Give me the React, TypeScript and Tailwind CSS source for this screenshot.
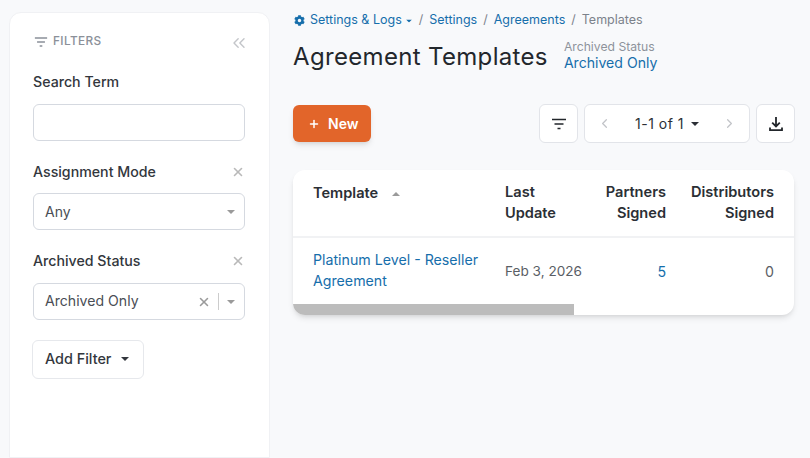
import React from 'react';
import { ChevronLeft, ChevronRight, ChevronsLeft, Plus, X } from 'lucide-react';
import { FaCog } from 'react-icons/fa';

const Caret: React.FC<{ className?: string; up?: boolean }> = ({ className = '', up = false }) => (
    <svg width="8" height="4" viewBox="0 0 8 4" className={className}>
        <path d={up ? 'M0 4 L4 0 L8 4 Z' : 'M0 0 L8 0 L4 4 Z'} fill="currentColor" />
    </svg>
);

const FilterLines: React.FC<{ className?: string; size?: number; weight?: number }> = ({ className = '', size = 16, weight = 1.3 }) => (
    <svg width={size} height={size} viewBox="0 0 16 16" className={className} fill="none" stroke="currentColor" strokeWidth={weight}>
        <path d="M1 3.5 H15 M3.5 8 H12.5 M6.5 12.5 H9.5" />
    </svg>
);

const DownloadIcon: React.FC = () => (
    <svg width="16" height="16" viewBox="0 0 16 16" fill="none" stroke="currentColor" strokeWidth="1.8" className="text-[#22262b]">
        <path d="M8 1 V10 M4.2 6.6 L8 10.4 L11.8 6.6" />
        <path d="M2 11.5 V14.2 H14 V11.5" />
    </svg>
);

const FilterLabel: React.FC<{ label: string; removable?: boolean; gap: string }> = ({ label, removable = false, gap }) => (
    <div className={`flex items-center justify-between h-5 ${gap}`}>
        <span className="text-[14.2px] font-medium text-[#33373d]">{label}</span>
        {removable && <X size={14} strokeWidth={2.8} className="text-[#b9b9b9] mr-[1px]" />}
    </div>
);

const Sidebar: React.FC = () => (
    <aside className="w-[261px] h-[446px] shrink-0 mt-3 ml-[9px] bg-white border border-[#f0f1f4] rounded-t-xl px-[23px] pt-[20px]">
        <div className="flex items-center justify-between h-[18px] pl-[1px]">
            <div className="flex items-center gap-[5px] text-[#8b9099]">
                <FilterLines size={14} weight={1.6} />
                <span className="text-[11.8px] font-medium tracking-[0.4px]">FILTERS</span>
            </div>
            <ChevronsLeft size={20} strokeWidth={1.7} className="text-[#c4c6ca] -mr-[3px] mt-[1px]" />
        </div>
        <div className="mt-[21px]">
            <FilterLabel label="Search Term" gap="mb-[12px]" />
            <input className="block w-[212px] h-[37px] bg-white border border-[#d5d9e0] rounded-md" />
        </div>
        <div className="mt-[21px]">
            <FilterLabel label="Assignment Mode" gap="mb-[11px]" removable />
            <div className="flex items-center justify-between w-[212px] h-[37px] border border-[#d5d9e0] rounded-md pl-[11px] pr-[9px]">
                <span className="text-[14px] pb-[1px] text-[#4a4e55]">Any</span>
                <Caret className="text-[#9a9a9a]" />
            </div>
        </div>
        <div className="mt-[21px]">
            <FilterLabel label="Archived Status" gap="mb-[12px]" removable />
            <div className="flex items-center w-[212px] h-[37px] border border-[#d5d9e0] rounded-md pl-[11px] pr-[9px]">
                <span className="text-[14.1px] pb-[1px] text-[#4a4e55] flex-1">Archived Only</span>
                <X size={14} strokeWidth={2.6} className="text-[#9b9b9b] mr-[-1px]" />
                <div className="w-px h-[17px] bg-[#cccccc] mx-[8px]" />
                <Caret className="text-[#9a9a9a]" />
            </div>
        </div>
        <button className="flex items-center gap-[10px] mt-[20px] -ml-[1px] h-[39px] w-[112px] pl-[12px] bg-white border border-[#e6e8ec] rounded-md text-[14.4px] font-medium text-[#33373d]">
            <span className="pb-[1px]">Add Filter</span>
            <Caret className="text-[#33373d] -mt-[1px]" />
        </button>
    </aside>
);

const Main: React.FC = () => (
    <main className="flex-1 pl-[23px] pr-[16px] pt-[12px] min-w-0">
        <nav className="flex items-center h-[17px] text-[12.5px] text-[#166eab]">
            <FaCog size={11} className="mr-[5px] ml-[1px]" />
            <span>Settings &amp; Logs</span>
            <Caret className="ml-[3px] scale-75" />
            <span className="text-[#7c828b] mx-[6px]">/</span>
            <span>Settings</span>
            <span className="text-[#7c828b] mx-[6px]">/</span>
            <span>Agreements</span>
            <span className="text-[#7c828b] mx-[6px]">/</span>
            <span className="text-[#7c828b]">Templates</span>
        </nav>
        <div className="flex items-center mt-[10px] h-[36px]">
            <h1 className="text-[24px] tracking-[0.33px] text-[#23272c]">Agreement Templates</h1>
            <div className="ml-[16px] flex flex-col -mt-[4px]">
                <span className="text-[12.2px] leading-4 text-[#8e939b]">Archived Status</span>
                <span className="text-[14.1px] leading-4 text-[#166eab]">Archived Only</span>
            </div>
        </div>
        <div className="flex items-center justify-between mt-[29px] h-[39px]">
            <button className="flex items-center h-[37px] w-[78px] pl-[15px] rounded-md bg-[#e2652a] text-white text-[14px] font-semibold shadow-md">
                <Plus size={12} strokeWidth={3} />
                <span className="ml-[8px]">New</span>
            </button>
            <div className="flex items-center gap-[6px] -mr-[1px]">
                <button className="flex items-center justify-center w-[39px] h-[39px] bg-white border border-[#e2e4e9] rounded-md text-[#22262b]">
                    <FilterLines />
                </button>
                <div className="flex items-center justify-between w-[166px] h-[39px] bg-white border border-[#e2e4e9] rounded-md px-[12px]">
                    <ChevronLeft size={15} className="text-[#c2c4c8]" />
                    <div className="flex items-center gap-[7px]">
                        <span className="text-[14px] tracking-[0.5px] text-[#2b2f35]">1-1 of 1</span>
                        <Caret className="text-[#2b2f35]" />
                    </div>
                    <ChevronRight size={15} className="text-[#c2c4c8]" />
                </div>
                <button className="flex items-center justify-center w-[39px] h-[39px] bg-white border border-[#e2e4e9] rounded-md">
                    <DownloadIcon />
                </button>
            </div>
        </div>
        <div className="mt-[27px] bg-white rounded-xl shadow-md overflow-hidden">
            <table className="w-full table-fixed border-collapse text-[14.2px]">
                <colgroup>
                    <col className="w-[192px]" />
                    <col className="w-[101px]" />
                    <col className="w-[100px]" />
                    <col />
                </colgroup>
                <thead>
                    <tr className="h-[67px] border-b-2 border-[#f1f2f4] text-[14.6px] text-[#2b2f35] leading-[21px]">
                        <th className="pl-5 pt-[12px] pb-[11px] align-top text-left font-semibold">
                            <span className="flex items-center gap-[14px] mt-[1px]">
                                Template
                                <Caret up className="text-[#9a9a9a]" />
                            </span>
                        </th>
                        <th className="pl-5 pt-[12px] pb-[11px] align-top text-left font-semibold">Last<br />Update</th>
                        <th className="pr-5 pt-[12px] pb-[11px] align-top text-right font-semibold">Partners<br />Signed</th>
                        <th className="pr-5 pt-[12px] pb-[11px] align-top text-right font-semibold">Distributors<br />Signed</th>
                    </tr>
                </thead>
                <tbody>
                    <tr className="h-[67px] leading-[21px]">
                        <td className="pl-5 pb-[2px] text-[#166eab]">Platinum Level - Reseller Agreement</td>
                        <td className="pl-5 text-[13.6px] text-[#5a5e65] whitespace-nowrap">Feb 3, 2026</td>
                        <td className="pr-5 text-right text-[#166eab]">5</td>
                        <td className="pr-5 text-right text-[#5a5e65]">0</td>
                    </tr>
                </tbody>
            </table>
            <div className="h-[11px]">
                <div className="h-full w-[281px] bg-[#bcbcbc]" />
            </div>
        </div>
    </main>
);

export default function App() {
    return (
        <div className="flex h-[458px] w-[810px] overflow-hidden bg-[#f8f9fb] font-['Inter',sans-serif]">
            <Sidebar />
            <Main />
        </div>
    );
}
